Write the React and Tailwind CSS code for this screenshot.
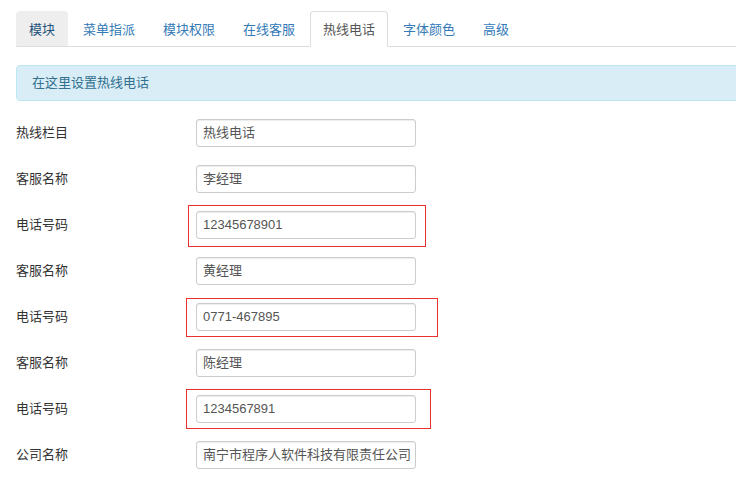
import React from "react";

const tabs = ["模块", "菜单指派", "模块权限", "在线客服", "热线电话", "字体颜色", "高级"];

const rows = [
  { label: "热线栏目", value: "热线电话" },
  { label: "客服名称", value: "李经理" },
  { label: "电话号码", value: "12345678901" },
  { label: "客服名称", value: "黄经理" },
  { label: "电话号码", value: "0771-467895" },
  { label: "客服名称", value: "陈经理" },
  { label: "电话号码", value: "1234567891" },
  { label: "公司名称", value: "南宁市程序人软件科技有限责任公司" },
];

const font = { fontFamily: '"Liberation Sans", "Noto Sans CJK SC", sans-serif' };

export default function App() {
  return (
    <div
      className="relative w-[736px] h-[492px] overflow-hidden bg-white text-[13px] text-[#333]"
      style={font}
    >
      <ul className="flex ml-4 pt-[11px] border-b border-[#ddd]">
        {tabs.map((t, i) => {
          const active = i === 4;
          const hover = i === 0;
          return (
            <li key={t} className="mr-[2px] -mb-px">
              <div
                className={
                  "h-[36px] px-[12px] flex items-center rounded-t-[4px] border leading-none " +
                  (active
                    ? "bg-white border-[#ddd] border-b-transparent text-[#555]"
                    : hover
                    ? "bg-[#eee] border-[#eee] border-b-[#ddd] text-[#23527c]"
                    : "border-transparent text-[#337ab7]")
                }
              >
                {t}
              </div>
            </li>
          );
        })}
      </ul>

      <div className="ml-4 mt-[18px] w-[740px] h-[36px] flex items-center px-[15px] bg-[#d9edf7] border border-[#bce8f1] rounded-[4px] text-[#31708f]">
        在这里设置热线电话
      </div>

      <div className="mt-[18px] ml-4 flex flex-col gap-[18px]">
        {rows.map((r, i) => (
          <div key={i} className="flex items-center h-[28px]">
            <div className="w-[180px]">{r.label}</div>
            <div className="w-[220px] h-[28px] border border-[#ccc] rounded-[3px] px-[6px] flex items-center text-[#555] whitespace-nowrap overflow-hidden shadow-[inset_0_1px_1px_rgba(0,0,0,0.075)]">
              {r.value}
            </div>
          </div>
        ))}
      </div>

      <div className="absolute left-[188px] top-[205px] w-[238px] h-[42px] border border-[#e8302f]" />
      <div className="absolute left-[186px] top-[298px] w-[252px] h-[39px] border border-[#e8302f]" />
      <div className="absolute left-[186px] top-[389px] w-[245px] h-[40px] border border-[#e8302f]" />
    </div>
  );
}
